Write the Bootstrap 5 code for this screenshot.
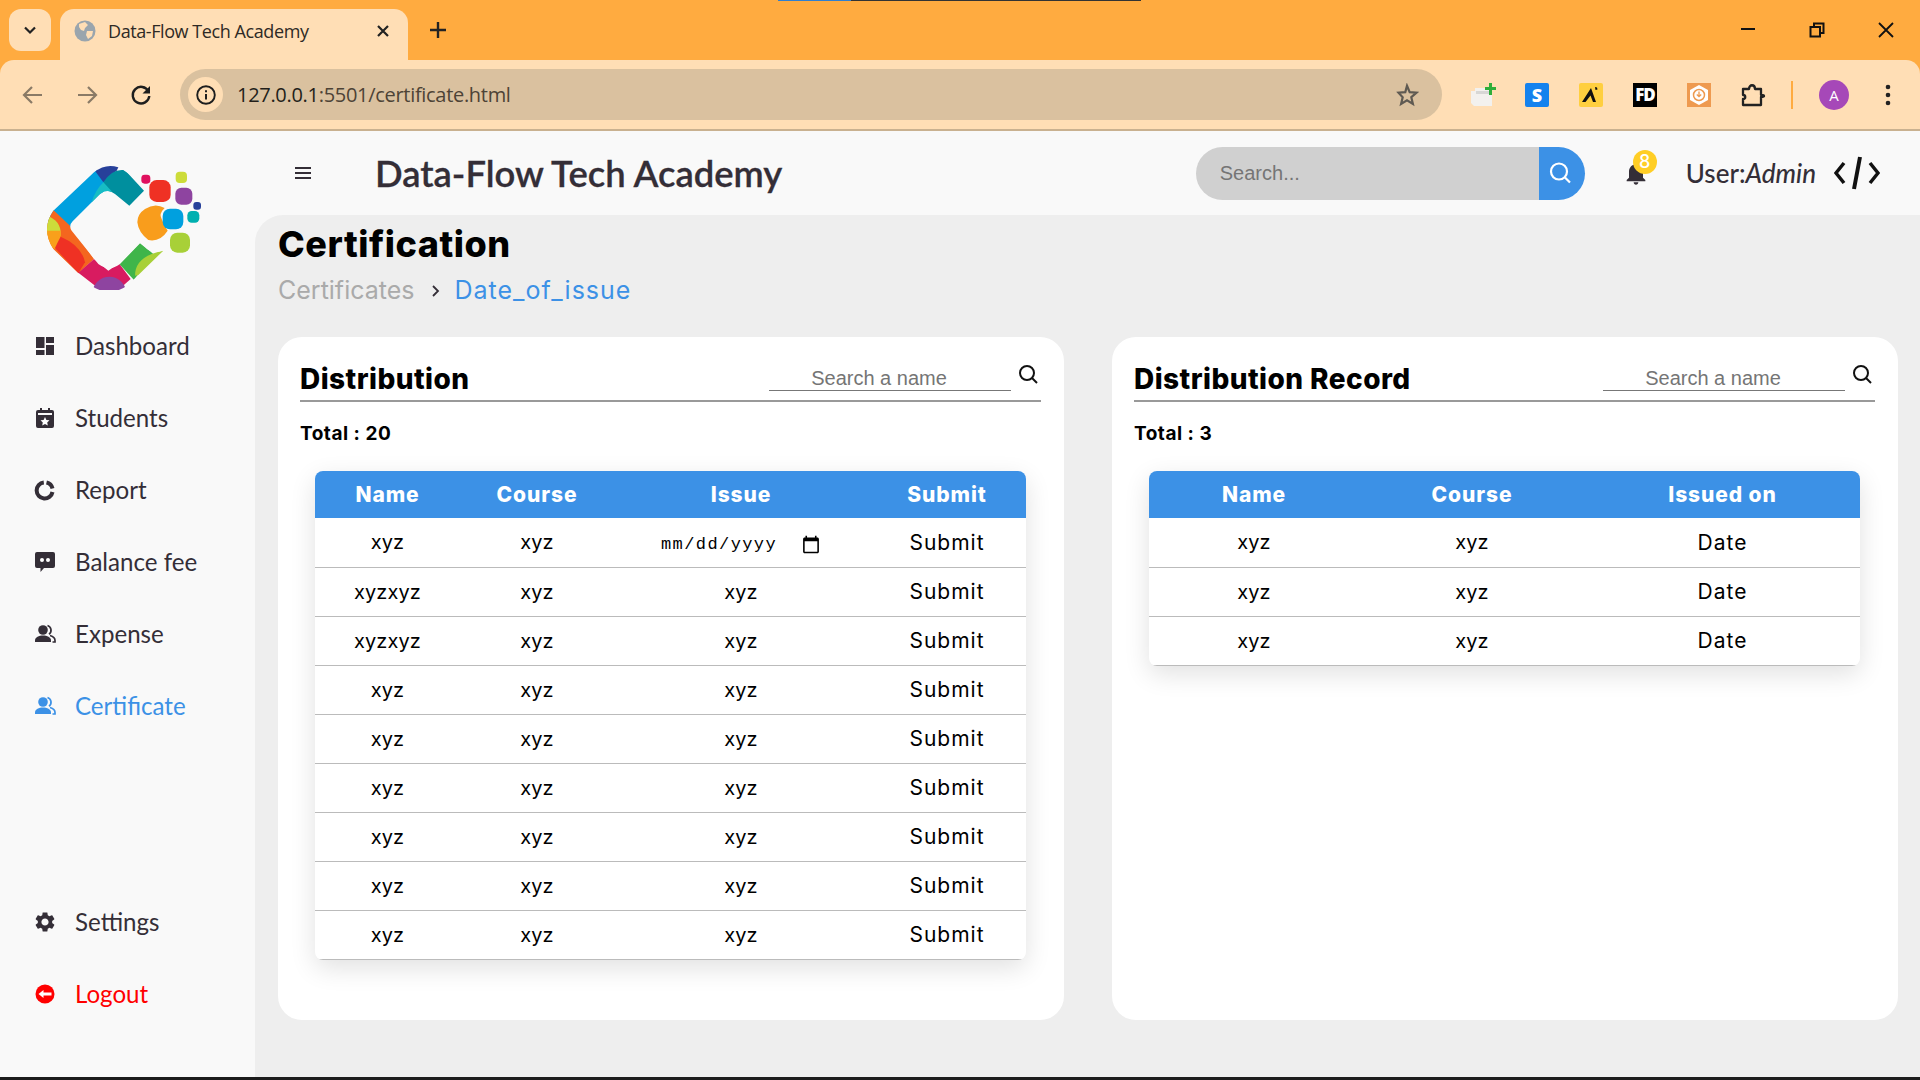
<!DOCTYPE html>
<html lang="en">
<head>
  <meta charset="UTF-8">
  <title>Data-Flow Tech Academy</title>
  <link href="https://cdn.jsdelivr.net/npm/bootstrap@5.3.0/dist/css/bootstrap.min.css" rel="stylesheet">
  <style>
    body { background: #f9f9f9; font-family: "Lato", sans-serif; color: #342e37; height: 1080px; overflow: hidden; }
    svg { display: block; flex-shrink: 0; }

    /* browser chrome */
    .tabstrip { height: 60px; background: #ffab40; position: relative; }
    .loadline { height: 1px; width: 363px; margin-left: 778px; background: linear-gradient(90deg, #2f7fd0 20%, #333 20%); position: absolute; top: 0; left: 0; }
    .tabdrop { width: 42px; height: 42px; margin: 9px 0 0 9px; background: #ffdeb5; border-radius: 12px; }
    .tabitem { width: 348px; height: 51px; margin: 9px 0 0 9px; background: #ffdeb5; border-radius: 14px 14px 0 0; padding: 0 14px 8px 14px; font: 18px "Open Sans", sans-serif; color: #2e2a25; letter-spacing: -.42px; }
    .plusicon { margin: 20px 0 0 20px; }
    .winbtns { margin-left: auto; margin-top: 22px; width: 205px; padding-right: 26px; padding-left: 25px; }
    .toolstrip-bg { background: #ffab40; }
    .toolbar { height: 71px; background: #ffdeb5; border-bottom: 2px solid #c9b190; border-radius: 14px 14px 0 0; padding-left: 22px; }
    .tb-left { width: 0; }
    .omnibox { width: 1262px; height: 51px; margin-left: 158px; background: #dac19f; border-radius: 26px; padding: 0 23px 0 8px; }
    .sitechip { width: 35px; height: 35px; background: #ffdeb5; border-radius: 50%; }
    .urltext { margin-left: 14px; font: 20px "Open Sans", sans-serif; letter-spacing: -.3px; color: #4d4336; }
    .urltext b { font-weight: 400; color: #231f1a; }
    .extrow { margin-left: 14px; }
    .extslot { width: 54px; }
    .extsep { width: 2px; height: 28px; background: #ffab40; margin: 0 26px 0 11px; }
    .avatar { width: 30px; height: 30px; border-radius: 50%; background: #a648b8; color: #fff; font: 15px "Open Sans", sans-serif; }
    .moredots { margin-left: 36px; }
    .extfd { width: 24px; height: 24px; background: #000; color: #fff; font: 800 17px/24px "Open Sans", sans-serif; text-align: center; letter-spacing: -1px; }
    .exts { width: 24px; height: 24px; background: #1482ee; border-radius: 2px; color: #fff; font: 800 18px/24px "Open Sans", sans-serif; text-align: center; }

    /* app */
    .appwrap { height: 946px; }
    .sidebar { width: 255px; background: #f9f9f9; }
    .logobox { height: 179px; padding: 33px 0 0 40px; }
    .sidelink { height: 72px; padding-left: 33px; gap: 18px; font-size: 24.1px; color: #342e37; text-decoration: none; }
    .sidelink.is-active { color: #3c91e6; }
    .sidelink.is-out { color: #f00; }
    .sidelink svg { width: 24px; height: 24px; }
    .sidefoot { padding-bottom: 47px; }

    .mainarea { min-width: 0; }
    .topline { height: 84px; padding-right: 40px; }
    .burger { margin-left: 38px; margin-right: 62px; }
    .brandname { font-size: 36.4px; font-weight: 600; color: #342e37; margin: 0; line-height: 1; -webkit-text-stroke: .3px #342e37; }
    .topsearch { width: 389px; height: 53px; margin-right: 37px; }
    .topsearch input { flex: 1; min-width: 0; height: 53px; background: #d0d0d0; border: 0; border-radius: 27px 0 0 27px; padding: 0 24px; font: 20px "Liberation Sans", sans-serif; outline: 0; }
    .topsearch input::placeholder { color: #757575; opacity: 1; }
    .topsearch button { width: 46px; height: 53px; background: #3c91e6; border: 0; border-radius: 0 27px 27px 0; padding: 0 0 0 8px; }
    .bellbox { position: relative; margin-right: 36px; }
    .bellnum { position: absolute; left: 11px; top: -9px; width: 24px; height: 24px; border-radius: 50%; background: #ffce26; color: #fff; font: 500 18px/24px "Inter", sans-serif; text-align: center; }
    .whois { font-size: 26px; font-weight: 500; color: #342e37; margin-right: 18px; white-space: nowrap; }

    .contentzone { background: #eee; border-radius: 28px 0 0 0; padding: 4px 22px 0 23px; height: 862px; font-family: "Inter", sans-serif; color: #000; }
    .pagehead { font-family: "Inter", sans-serif; font-size: 36px; font-weight: 800; line-height: 50px; margin: 0; letter-spacing: .55px; }
    .crumbs { height: 44px; font-size: 25px; color: #aaa; margin-bottom: 24px; gap: 17px; }
    .crumbs a { color: #3c91e6; text-decoration: none; letter-spacing: 1px; margin-left: -3px; }

    .panel { width: 786px; height: 683px; border: 0; border-radius: 24px; padding: 22px 23px 22px 22px; background: #fff; }
    .panelhead { height: 43px; border-bottom: 2px solid #999; }
    .panelhead h3 { font-family: "Inter", sans-serif; font-size: 28px; font-weight: 800; margin: 0 0 1px; letter-spacing: .45px; line-height: 40px; }
    .namebox { width: 242px; height: 32px; border: 0; border-bottom: 1px solid #777; padding: 8px 22px 0 0; text-align: center; font: 20px "Liberation Sans", sans-serif; outline: 0; background: none; margin-bottom: 9px; }
    .namebox::placeholder { color: #757575; opacity: 1; }
    .namewrap { gap: 5px; padding-right: 1px; }
    .namewrap svg { margin-top: 4px; }
    .totalline { font-size: 19px; font-weight: 700; line-height: 30px; margin-top: 17px; letter-spacing: .5px; }
    .tablebox { margin: 22px 15px 0; border-radius: 8px; overflow: hidden; box-shadow: 0 8px 26px rgba(0,0,0,.12); background: #fff; }
    .datatable { margin: 0; table-layout: fixed; font-size: 20px; text-align: center; color: #000; --bs-table-color: #000; }
    .datatable th { background: #3c91e6; color: #fff; font-weight: 800; height: 47px; padding: 0; vertical-align: middle; border: 0; font-size: 21px; letter-spacing: .9px; box-shadow: none; }
    .datatable td { height: 49px; padding: 0; vertical-align: middle; border-bottom: 1px solid #bbb; letter-spacing: .1px; }
    .datatable td.wordcell { font-size: 21px; letter-spacing: 1px; }
    .dateinput { border: 0; width: 160px; padding: 2px 0 0; background: none; font: 17px "Liberation Mono", monospace; letter-spacing: 1.4px; color: #000; outline: 0; }
    .dateinput::-webkit-calendar-picker-indicator { width: 20px; height: 20px; padding: 0; margin: 0; }
    .colname { width: 145px; } .colcourse { width: 154px; } .colissue { width: 254px; }
    .recname { width: 210px; } .reccourse { width: 226px; }
    .bottomline { height: 3px; background: #1c1c1c; }
  </style>
</head>
<body>

<div class="tabstrip d-flex align-items-start">
  <div class="loadline"></div>
  <div class="tabdrop d-flex align-items-center justify-content-center">
    <svg width="16" height="16" viewBox="0 0 16 16"><path d="M3 5.500l5 5 5-5" fill="none" stroke="#222" stroke-width="2.200"/></svg>
  </div>
  <div class="tabitem d-flex align-items-center">
    <svg width="22" height="22" viewBox="0 0 22 22" class="me-2"><circle cx="11" cy="11" r="10.500" fill="#9aa5ad"/><path d="M5 4l6-2 3 3-3 3-1 3-3-1-2-3zM13 11l6 0-1 5-4 3-2-4z" fill="#ffdeb5"/></svg>
    <span class="ms-1">Data-Flow Tech Academy</span>
    <svg width="14" height="14" viewBox="0 0 14 14" class="ms-auto me-1"><path d="M2 2l10 10M12 2L2 12" stroke="#222" stroke-width="2.200"/></svg>
  </div>
  <svg class="plusicon" width="20" height="20" viewBox="0 0 20 20"><path d="M10 2v16M2 10h16" stroke="#222" stroke-width="2.400"/></svg>
  <div class="winbtns d-flex justify-content-between">
    <svg width="16" height="14" viewBox="0 0 16 14"><path d="M1 7h14" stroke="#111" stroke-width="2"/></svg>
    <svg width="16" height="16" viewBox="0 0 16 16"><path d="M1.500 5h9.500v9.500H1.500zM5 5V1.500h9.500V11H11" fill="none" stroke="#111" stroke-width="2"/></svg>
    <svg width="16" height="16" viewBox="0 0 16 16"><path d="M1 1l14 14M15 1L1 15" stroke="#111" stroke-width="1.800"/></svg>
  </div>
</div>

<div class="toolstrip-bg">
<div class="toolbar d-flex align-items-center">
  <div class="tb-left d-flex align-items-center gap-4">
    <svg width="22" height="22" viewBox="0 0 22 22"><path d="M20 11H3M10 3l-8 8 8 8" fill="none" stroke="#8a7a66" stroke-width="2.200"/></svg>
    <svg class="ms-2" width="22" height="22" viewBox="0 0 22 22"><path d="M2 11h17M12 3l8 8-8 8" fill="none" stroke="#8a7a66" stroke-width="2.200"/></svg>
    <svg class="ms-2" width="22" height="22" viewBox="0 0 22 22"><path d="M18.500 7.500A8.300 8.300 0 1 0 19.300 12" fill="none" stroke="#1e1e1e" stroke-width="2.400"/><path d="M20 2v7.500h-7.500z" fill="#1e1e1e"/></svg>
  </div>
  <div class="omnibox d-flex align-items-center">
    <div class="sitechip d-flex align-items-center justify-content-center">
      <svg width="20" height="20" viewBox="0 0 20 20"><circle cx="10" cy="10" r="8.800" fill="none" stroke="#1e1e1e" stroke-width="1.900"/><path d="M10 9v5.500M10 5.300v2" stroke="#1e1e1e" stroke-width="2"/></svg>
    </div>
    <div class="urltext"><b>127.0.0.1</b>:5501/certificate.html</div>
    <svg class="ms-auto" width="24" height="24" viewBox="0 0 24 24"><path d="M12 2.800l2.700 6.300 6.800.6-5.200 4.500 1.600 6.700-5.900-3.600-5.900 3.600 1.600-6.700L3.500 9.700l6.800-.6z" fill="none" stroke="#5f5a52" stroke-width="2.200"/></svg>
  </div>
  <div class="extrow d-flex align-items-center">
    <div class="extslot d-flex justify-content-center">
      <svg width="26" height="26" viewBox="0 0 26 26"><path d="M1 9h4V6h17v18H4l-3-3z" fill="#f3f1ee"/><path d="M6 9h16v3H6z" fill="#d7d7d5"/><path d="M15 5h4V1h3v4h4v3h-4v5h-3V8h-4z" fill="#2fae3a"/></svg>
    </div>
    <div class="extslot d-flex justify-content-center"><div class="exts">S</div></div>
    <div class="extslot d-flex justify-content-center">
      <svg width="24" height="24" viewBox="0 0 24 24"><rect width="24" height="24" rx="2" fill="#ffcf3f"/><path d="M3 19L12 5l5 14h-3l-2.500-6.500L6.500 19zM16 4l2 .5 .5 2-2 .5z" fill="#111"/></svg>
    </div>
    <div class="extslot d-flex justify-content-center"><div class="extfd">FD</div></div>
    <div class="extslot d-flex justify-content-center">
      <svg width="24" height="24" viewBox="0 0 24 24"><rect width="24" height="24" fill="#ee9a50"/><path d="M12 2l9 5v10l-9 5-9-5V7z" fill="#fff"/><circle cx="12" cy="12" r="5.500" fill="none" stroke="#ee9a50" stroke-width="1.500"/><path d="M12 8.500v5M9.800 11.500l2.200 2.200 2.200-2.200" fill="none" stroke="#ee9a50" stroke-width="1.300"/></svg>
    </div>
    <div class="extslot d-flex justify-content-center">
      <svg width="26" height="26" viewBox="0 0 26 26"><path d="M3 7h6c0-5 6-5 6 0h6v6c4 0 4 2 0 2v8H3v-6c3 0 3-4 0-4z" fill="none" stroke="#222" stroke-width="2.300" stroke-linejoin="round"/></svg>
    </div>
    <div class="extsep"></div>
    <div class="avatar d-flex align-items-center justify-content-center">A</div>
    <svg class="moredots" width="6" height="22" viewBox="0 0 6 22"><circle cx="3" cy="3" r="2.300" fill="#222"/><circle cx="3" cy="11" r="2.300" fill="#222"/><circle cx="3" cy="19" r="2.300" fill="#222"/></svg>
  </div>
</div>
</div>

<div class="appwrap d-flex">
  <aside class="sidebar d-flex flex-column">
    <div class="logobox">
      <svg width="163" height="126" viewBox="60 40 489 378">
        <defs>
          <clipPath id="ringclip"><path d="M372 120L318 62Q268 28 222 65L100 180Q62 235 100 295L210 402Q268 445 325 402L430 300Q395 312 375 290L360 278L300 340Q268 365 235 340L155 240Q145 225 158 212L240 130Q262 112 285 130L328 165Z"/></clipPath>
        </defs>
        <g clip-path="url(#ringclip)">
          <path d="M60 215L220 40 260 90 250 130 150 230z" fill="#00a0df"/>
          <path d="M210 40H300L290 60 250 95z" fill="#27409a"/>
          <path d="M250 95Q275 55 310 58L400 120 328 170 270 125z" fill="#008f9e"/>
          <path d="M215 155Q225 120 250 95L275 122 240 160z" fill="#17bdc4"/>
          <path d="M60 210L100 178 150 225 222 325 175 368 60 260z" fill="#f4661f"/>
          <path d="M80 195Q125 210 122 255L70 250z" fill="#cddc3a"/>
          <path d="M70 240H122Q125 275 105 295L70 280z" fill="#f9a01b"/>
          <path d="M105 292Q115 270 122 258Q185 285 195 335L175 368z" fill="#ef3124"/>
          <path d="M222 325L265 360 297 338 332 385 270 440 175 366z" fill="#d81b60"/>
          <ellipse cx="268" cy="432" rx="52" ry="54" fill="#8e44a0"/>
          <path d="M298 340L360 276 400 310 342 388z" fill="#3fb54a"/>
          <path d="M345 375Q345 330 395 310L440 295 380 370z" fill="#a8d038"/>
        </g>
        <rect x="364" y="72" width="27" height="27" rx="10" fill="#e0115f"/>
        <rect x="388" y="88" width="64" height="66" rx="22" fill="#ef3124"/>
        <rect x="467" y="63" width="34" height="34" rx="12" fill="#cddc3a"/>
        <rect x="466" y="111" width="51" height="51" rx="18" fill="#8e44a0"/>
        <rect x="520" y="154" width="23" height="23" rx="9" fill="#27409a"/>
        <rect x="502" y="181" width="36" height="35" rx="13" fill="#00b0b0"/>
        <path d="M352 215Q352 190 375 175 405 155 434 172 415 190 425 205 432 225 443 240 420 275 385 268 355 245 352 215z" fill="#f99d1c"/>
        <rect x="428" y="174" width="62" height="62" rx="22" fill="#00a0df"/>
        <rect x="450" y="246" width="60" height="60" rx="22" fill="#a8d038"/>
      </svg>
    </div>
    <nav class="d-flex flex-column">
      <a class="sidelink d-flex align-items-center" href="#"><svg viewBox="0 0 24 24" fill="#342e37"><path d="M3 3h8.500v11H3zM3 16h8.500v5H3zM13 3h8v6h-8zM13 11h8v10h-8z"/></svg>Dashboard</a>
      <a class="sidelink d-flex align-items-center" href="#"><svg viewBox="0 0 24 24"><path d="M5 4h2V2h2v2h6V2h2v2h2a2 2 0 0 1 2 2v14a2 2 0 0 1-2 2H5a2 2 0 0 1-2-2V6a2 2 0 0 1 2-2z" fill="#342e37"/><path d="M5 7h14v2H5z" fill="#f9f9f9"/><path d="M12 11l1.400 2.900 3.100.4-2.300 2.100.6 3.100-2.800-1.500-2.800 1.500.6-3.100-2.300-2.100 3.100-.4z" fill="#fff"/></svg>Students</a>
      <a class="sidelink d-flex align-items-center" href="#"><svg viewBox="0 0 24 24" fill="none" stroke="#342e37" stroke-width="4"><path d="M10.800 4.500A8 8 0 1 0 19.500 14"/><path d="M13.500 4.500A8 8 0 0 1 19.500 10.500"/></svg>Report</a>
      <a class="sidelink d-flex align-items-center" href="#"><svg viewBox="0 0 24 24"><path d="M4 2h16a2 2 0 0 1 2 2v12a2 2 0 0 1-2 2h-9l-3.500 4v-4H4a2 2 0 0 1-2-2V4a2 2 0 0 1 2-2z" fill="#342e37"/><circle cx="9" cy="10" r="2" fill="#fff"/><circle cx="15" cy="10" r="2" fill="#fff"/></svg>Balance fee</a>
      <a class="sidelink d-flex align-items-center" href="#"><svg viewBox="0 0 24 24" fill="#342e37"><circle cx="10" cy="8" r="4.800"/><path d="M2 20v-1.500C2 15 6 13.500 10 13.500s8 1.500 8 5V20z"/><path d="M14.500 3.500A5 5 0 0 1 16 12.300M17 13.500c3 .8 5 2.500 5 5V20h-2.500" fill="none" stroke="#342e37" stroke-width="1.700"/></svg>Expense</a>
      <a class="sidelink is-active d-flex align-items-center" href="#"><svg viewBox="0 0 24 24" fill="#3c91e6"><circle cx="10" cy="8" r="4.800"/><path d="M2 20v-1.500C2 15 6 13.500 10 13.500s8 1.500 8 5V20z"/><path d="M14.500 3.500A5 5 0 0 1 16 12.300M17 13.500c3 .8 5 2.500 5 5V20h-2.500" fill="none" stroke="#3c91e6" stroke-width="1.700"/></svg>Certificate</a>
    </nav>
    <div class="sidefoot mt-auto d-flex flex-column">
      <a class="sidelink d-flex align-items-center" href="#"><svg viewBox="0 0 24 24" fill="#342e37"><path fill-rule="evenodd" d="M19.140 12.940c.04-.3.06-.61.06-.94 0-.32-.02-.64-.07-.94l2.030-1.580c.18-.14.23-.41.12-.61l-1.920-3.320c-.12-.22-.37-.29-.59-.22l-2.390.96c-.5-.38-1.030-.7-1.620-.94l-.36-2.540c-.04-.24-.24-.41-.48-.41h-3.840c-.24 0-.43.17-.47.41l-.36 2.540c-.59.24-1.130.57-1.620.94l-2.390-.96c-.22-.08-.47 0-.59.22L2.740 8.870c-.12.21-.08.47.12.61l2.030 1.580c-.05.3-.09.63-.09.94s.02.64.07.94l-2.030 1.580c-.18.14-.23.41-.12.61l1.920 3.320c.12.22.37.29.59.22l2.390-.96c.5.38 1.030.7 1.620.94l.36 2.540c.05.24.24.41.48.41h3.840c.24 0 .44-.17.47-.41l.36-2.540c.59-.24 1.130-.56 1.620-.94l2.390.96c.22.08.47 0 .59-.22l1.920-3.320c.12-.22.07-.47-.12-.61l-2.010-1.580zM12 15.600c-1.980 0-3.600-1.620-3.600-3.600s1.620-3.600 3.600-3.600 3.600 1.620 3.600 3.600-1.620 3.600-3.600 3.600z"/></svg>Settings</a>
      <a class="sidelink is-out d-flex align-items-center" href="#"><svg viewBox="0 0 24 24"><circle cx="12" cy="12" r="9.500" fill="#f00"/><path d="M5.500 12l5-4v2.500h8v3h-8V16z" fill="#fff"/></svg>Logout</a>
    </div>
  </aside>

  <div class="mainarea flex-grow-1 d-flex flex-column">
    <header class="topline d-flex align-items-center">
      <svg class="burger" width="20" height="16" viewBox="0 0 20 16"><path d="M2 3h16M2 8h16M2 13h16" stroke="#342e37" stroke-width="2"/></svg>
      <h1 class="brandname">Data-Flow Tech Academy</h1>
      <form class="topsearch ms-auto d-flex">
        <input type="text" placeholder="Search...">
        <button type="button" class="d-flex align-items-center justify-content-start">
          <svg width="26" height="26" viewBox="0 0 26 26"><circle cx="12" cy="11.500" r="8" fill="none" stroke="#fff" stroke-width="2.200"/><path d="M18 17.500l5 5" stroke="#fff" stroke-width="2.200"/></svg>
        </button>
      </form>
      <div class="bellbox">
        <svg width="28" height="28" viewBox="0 0 24 24" fill="#342e37"><path d="M12 22c1.100 0 2-.9 2-2h-4c0 1.100.89 2 2 2zm6-6v-5c0-3.070-1.640-5.640-4.500-6.320V4c0-.83-.67-1.500-1.500-1.500s-1.500.67-1.500 1.500v.68C7.630 5.360 6 7.920 6 11v5l-2 2v1h16v-1l-2-2z"/></svg>
        <span class="bellnum">8</span>
      </div>
      <div class="whois">User:<em>Admin</em></div>
      <svg width="46" height="38" viewBox="0 0 46 38"><path d="M10 9L2 19l8 10M36 9l8 10-8 10" fill="none" stroke="#111" stroke-width="3.500"/><path d="M26 3l-6 32" stroke="#111" stroke-width="4"/></svg>
    </header>

    <main class="contentzone flex-grow-1">
      <h2 class="pagehead">Certification</h2>
      <div class="crumbs d-flex align-items-center">
        <span>Certificates</span>
        <svg width="9" height="14" viewBox="0 0 9 14"><path d="M2 2l5 5-5 5" fill="none" stroke="#342e37" stroke-width="1.800"/></svg>
        <a href="#">Date_of_issue</a>
      </div>

      <div class="d-flex justify-content-between">
        <section class="card panel">
          <div class="panelhead d-flex justify-content-between align-items-end">
            <h3>Distribution</h3>
            <div class="namewrap d-flex align-items-start">
              <input class="namebox" type="text" placeholder="Search a name">
              <svg width="24" height="24" viewBox="0 0 24 24"><circle cx="11" cy="10" r="7" fill="none" stroke="#111" stroke-width="2"/><path d="M16 15l5 5" stroke="#111" stroke-width="2"/></svg>
            </div>
          </div>
          <div class="totalline">Total : 20</div>
          <div class="tablebox">
            <table class="table datatable">
              <thead>
                <tr><th class="colname">Name</th><th class="colcourse">Course</th><th class="colissue">Issue</th><th>Submit</th></tr>
              </thead>
              <tbody>
                <tr><td>xyz</td><td>xyz</td><td><input class="dateinput" type="date"></td><td class="wordcell">Submit</td></tr>
                <tr><td>xyzxyz</td><td>xyz</td><td>xyz</td><td class="wordcell">Submit</td></tr>
                <tr><td>xyzxyz</td><td>xyz</td><td>xyz</td><td class="wordcell">Submit</td></tr>
                <tr><td>xyz</td><td>xyz</td><td>xyz</td><td class="wordcell">Submit</td></tr>
                <tr><td>xyz</td><td>xyz</td><td>xyz</td><td class="wordcell">Submit</td></tr>
                <tr><td>xyz</td><td>xyz</td><td>xyz</td><td class="wordcell">Submit</td></tr>
                <tr><td>xyz</td><td>xyz</td><td>xyz</td><td class="wordcell">Submit</td></tr>
                <tr><td>xyz</td><td>xyz</td><td>xyz</td><td class="wordcell">Submit</td></tr>
                <tr><td>xyz</td><td>xyz</td><td>xyz</td><td class="wordcell">Submit</td></tr>
              </tbody>
            </table>
          </div>
        </section>

        <section class="card panel">
          <div class="panelhead d-flex justify-content-between align-items-end">
            <h3>Distribution Record</h3>
            <div class="namewrap d-flex align-items-start">
              <input class="namebox" type="text" placeholder="Search a name">
              <svg width="24" height="24" viewBox="0 0 24 24"><circle cx="11" cy="10" r="7" fill="none" stroke="#111" stroke-width="2"/><path d="M16 15l5 5" stroke="#111" stroke-width="2"/></svg>
            </div>
          </div>
          <div class="totalline">Total : 3</div>
          <div class="tablebox">
            <table class="table datatable">
              <thead>
                <tr><th class="recname">Name</th><th class="reccourse">Course</th><th>Issued on</th></tr>
              </thead>
              <tbody>
                <tr><td>xyz</td><td>xyz</td><td class="wordcell">Date</td></tr>
                <tr><td>xyz</td><td>xyz</td><td class="wordcell">Date</td></tr>
                <tr><td>xyz</td><td>xyz</td><td class="wordcell">Date</td></tr>
              </tbody>
            </table>
          </div>
        </section>
      </div>
    </main>
  </div>
</div>
<div class="bottomline"></div>

<script src="https://cdn.jsdelivr.net/npm/bootstrap@5.3.0/dist/js/bootstrap.bundle.min.js"></script>
</body>
</html>
